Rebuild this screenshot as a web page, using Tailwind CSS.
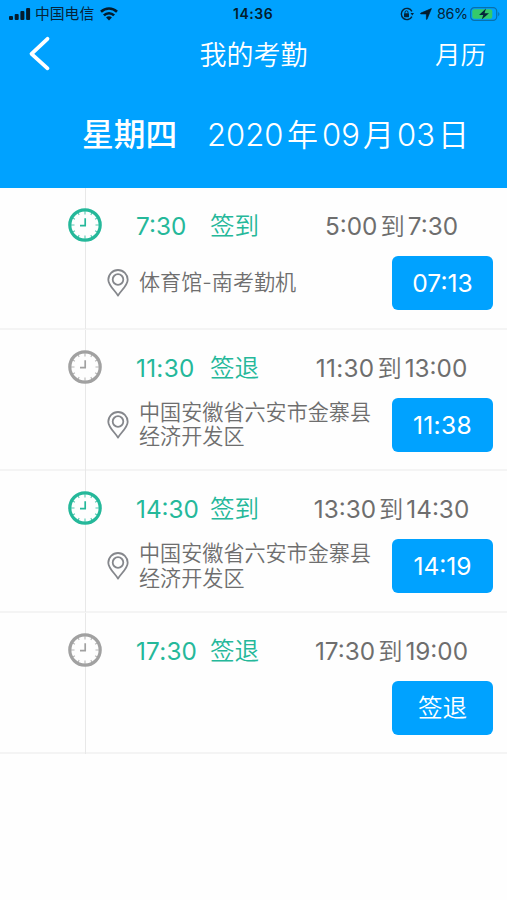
<!DOCTYPE html>
<html lang="zh-CN">
<head>
<meta charset="utf-8">
<title>我的考勤</title>
<script src="https://cdn.jsdelivr.net/npm/@tailwindcss/browser@4"></script>
</head>
<body class="w-[507px] h-[900px] overflow-hidden bg-[#fefefe] font-['Inter','Noto_Sans_CJK_SC',sans-serif] text-[#6e6e6e]">
<svg class="hidden">
  <symbol id="clock" viewBox="0 0 34 34">
    <circle cx="17" cy="17" r="15.2" fill="#fefefe" stroke="currentColor" stroke-width="3.2"/>
    <g stroke="currentColor" stroke-width="1.1" opacity=".75">
      <path d="M17 3v3.5M17 27.5V31M3 17h3.5M27.5 17H31M10 4.900l1.200 2M24 4.900l-1.200 2M10 29.100l1.200-2M24 29.100l-1.200-2M4.900 10l2 1.200M29.100 10l-2 1.200M4.900 24l2-1.200M29.100 24l-2-1.200"/>
    </g>
    <path d="M17.200 10.300v7.600M12 17.600h6" fill="none" stroke="currentColor" stroke-width="1.700"/>
  </symbol>
  <symbol id="pin" viewBox="0 0 22 28">
    <path d="M11 26.600C8.500 22 1.300 16.500 1.300 10.700a9.700 9.700 0 0 1 19.400 0C20.700 16.500 13.500 22 11 26.600Z" fill="none" stroke="#85878c" stroke-width="1.800" stroke-linejoin="round"/>
    <circle cx="11" cy="10.500" r="5.300" fill="none" stroke="#85878c" stroke-width="1.800"/>
  </symbol>
</svg>

<header class="h-[188px] bg-[#00a2ff] text-white">
  <div class="flex h-[27px] items-center pl-[9px] pr-[6px] text-[#06243a]">
    <svg class="h-[14px] w-[22px]" viewBox="0 0 22 14" fill="#031c2d"><rect x="0" y="9" width="4" height="4" rx="1"/><rect x="5.700" y="7" width="4" height="6" rx="1"/><rect x="11.400" y="4" width="4" height="9" rx="1"/><rect x="17.100" y="1" width="4" height="12" rx="1"/></svg>
    <span class="ml-[4px] w-[60px] whitespace-nowrap text-[14.800px] leading-[20px]">中国电信</span>
    <svg class="ml-[5px] h-[14px] w-[18px]" viewBox="0 0 18 14" fill="none" stroke="#031c2d" stroke-width="2.600"><path d="M1 4.700a11.500 11.500 0 0 1 16 0M3.900 8.400a7.200 7.200 0 0 1 10.200 0"/><path d="M6.100 10.500a4 4 0 0 1 5.800 0L9 13.500Z" fill="#031c2d" stroke="none"/></svg>
    <span class="ml-[115px] w-[42px] whitespace-nowrap text-[14px] font-semibold leading-[20px] tracking-[0.550px] text-[#031c2d]">14:36</span>
    <svg class="ml-[125px] h-[14px] w-[14px]" viewBox="0 0 14 14" fill="none" stroke="#06243a"><path d="M11.900 4.400A5.600 5.600 0 1 0 11.900 9.600" stroke-width="1.400"/><path d="M10.500 6h3.500l-1.700 2.500z" fill="#06243a" stroke="none"/><rect x="4" y="6.300" width="5" height="3.900" rx=".6" fill="#06243a" stroke="none"/><path d="M5 6.500V5.300a1.500 1.500 0 0 1 3 0v1.200" stroke-width="1"/></svg>
    <svg class="ml-[6px] h-[12px] w-[12px]" viewBox="0 0 12 12" fill="#031c2d" stroke="#031c2d" stroke-width=".7" stroke-linejoin="round"><path d="M11.400.6 7 11.200q-.4.600-.6-.1V5.900H.800q-.7-.3 0-.8Z"/></svg>
    <span class="ml-[5px] w-[31px] whitespace-nowrap text-[14.300px] leading-[20px] tracking-[-0.300px]">86%</span>
    <svg class="ml-[2px] h-[14px] w-[31px]" viewBox="0 0 31 14"><rect x=".7" y=".7" width="26" height="12.600" rx="3.600" fill="none" stroke="#0870ab" stroke-width="1.200"/><rect x="2.300" y="2.300" width="20" height="9.400" rx="2" fill="#35c96b"/><path d="M28.200 4.700q2.500 2.300 0 4.600z" fill="#0870ab"/><path d="M16 1.500 9 7.900h4.300L11.700 12.600 19 6.200h-4.500z" fill="#06243a"/></svg>
  </div>
  <div class="grid h-[54px] grid-cols-[1fr_auto_1fr] items-center px-[21px]">
    <svg class="ml-[7px] h-[36px] w-[23px]" viewBox="0 0 23 36" fill="none" stroke="white" stroke-width="3.800" stroke-linecap="round" stroke-linejoin="round"><path d="M19.500 2.800 3.500 17.800l16 14.500"/></svg>
    <h1 class="pt-[3px] text-[27px] font-[350] leading-[36px]">我的考勤</h1>
    <span class="justify-self-end pt-[2px] text-[25.500px] font-[350] leading-[36px]">月历</span>
  </div>
  <div class="flex h-[107px] items-center pl-[82px] whitespace-nowrap leading-[40px]">
    <strong class="w-[125px] text-[31.700px] font-medium">星期四</strong>
    <div class="flex text-[31px] font-[350]">
      <span class="w-[80px]">2020</span><span class="w-[35px]">年</span><span class="w-[41px]">09</span><span class="w-[34px]">月</span><span class="w-[41px]">03</span><span>日</span>
    </div>
  </div>
</header>

<main>
  <section class="flex h-[141.500px] border-b-2 border-[#f4f4f4]">
    <div class="relative w-[102px] shrink-0 pl-[68px] pt-[20px] before:absolute before:left-[85px] before:top-0 before:h-[141px] before:w-px before:bg-[#e8e8e8]"><svg class="relative h-[34px] w-[34px] text-[#25b89a]"><use href="#clock"/></svg></div>
    <div class="flex-1 whitespace-nowrap">
      <div class="flex h-[68px] items-center pt-[8px] pl-[34px] text-[24.300px] leading-[32px]">
        <span class="w-[74px] text-[#25b89a]">7:30</span><span class="w-[66px] text-[24.600px] font-[350] text-[#25b89a]">签到</span>
        <div class="flex w-[231px] justify-center gap-[3px]"><span>5:00</span><span class="font-[350]">到</span><span>7:30</span></div>
      </div>
      <div class="flex h-[54px] items-center pl-[5px] pr-[14px]">
        <svg class="h-[28px] w-[22px]"><use href="#pin"/></svg>
        <p class="ml-[10px] flex-1 pt-[1px] text-[21.100px] font-[350] leading-[24.500px]">体育馆-南考勤机</p>
        <button class="h-[54px] w-[101px] rounded-[6px] bg-[#00a2ff] pt-[1px] text-[24.600px] text-white">07:13</button>
      </div>
    </div>
  </section>
  <section class="flex h-[141.500px] border-b-2 border-[#f4f4f4]">
    <div class="relative w-[102px] shrink-0 pl-[68px] pt-[20px] before:absolute before:left-[85px] before:top-0 before:h-[141px] before:w-px before:bg-[#e8e8e8]"><svg class="relative h-[34px] w-[34px] text-[#a1a1a1]"><use href="#clock"/></svg></div>
    <div class="flex-1 whitespace-nowrap">
      <div class="flex h-[68px] items-center pt-[8px] pl-[34px] text-[24.300px] leading-[32px]">
        <span class="w-[74px] tracking-[0.300px] text-[#25b89a]">11:30</span><span class="w-[66px] text-[24.600px] font-[350] text-[#25b89a]">签退</span>
        <div class="flex w-[231px] justify-center gap-[3px]"><span class="tracking-[0.300px]">11:30</span><span class="font-[350]">到</span><span>13:00</span></div>
      </div>
      <div class="flex h-[54px] items-center pl-[5px] pr-[14px]">
        <svg class="h-[28px] w-[22px]"><use href="#pin"/></svg>
        <p class="ml-[10px] flex-1 pt-[1px] text-[21.100px] font-[350] leading-[24.500px]">中国安徽省六安市金寨县<br>经济开发区</p>
        <button class="h-[54px] w-[101px] rounded-[6px] bg-[#00a2ff] pt-[1px] text-[24.600px] tracking-[0.300px] text-white">11:38</button>
      </div>
    </div>
  </section>
  <section class="flex h-[141.500px] border-b-2 border-[#f4f4f4]">
    <div class="relative w-[102px] shrink-0 pl-[68px] pt-[20px] before:absolute before:left-[85px] before:top-0 before:h-[141px] before:w-px before:bg-[#e8e8e8]"><svg class="relative h-[34px] w-[34px] text-[#25b89a]"><use href="#clock"/></svg></div>
    <div class="flex-1 whitespace-nowrap">
      <div class="flex h-[68px] items-center pt-[8px] pl-[34px] text-[24.300px] leading-[32px]">
        <span class="w-[74px] text-[#25b89a]">14:30</span><span class="w-[66px] text-[24.600px] font-[350] text-[#25b89a]">签到</span>
        <div class="flex w-[231px] justify-center gap-[3px]"><span>13:30</span><span class="font-[350]">到</span><span>14:30</span></div>
      </div>
      <div class="flex h-[54px] items-center pl-[5px] pr-[14px]">
        <svg class="h-[28px] w-[22px]"><use href="#pin"/></svg>
        <p class="ml-[10px] flex-1 pt-[1px] text-[21.100px] font-[350] leading-[24.500px]">中国安徽省六安市金寨县<br>经济开发区</p>
        <button class="h-[54px] w-[101px] rounded-[6px] bg-[#00a2ff] pt-[1px] text-[24.600px] text-white">14:19</button>
      </div>
    </div>
  </section>
  <section class="flex h-[141.500px] border-b-2 border-[#f4f4f4]">
    <div class="relative w-[102px] shrink-0 pl-[68px] pt-[20px] before:absolute before:left-[85px] before:top-0 before:h-[141px] before:w-px before:bg-[#e8e8e8]"><svg class="relative h-[34px] w-[34px] text-[#a1a1a1]"><use href="#clock"/></svg></div>
    <div class="flex-1 whitespace-nowrap">
      <div class="flex h-[68px] items-center pt-[8px] pl-[34px] text-[24.300px] leading-[32px]">
        <span class="w-[74px] tracking-[0.200px] text-[#25b89a]">17:30</span><span class="w-[66px] text-[24.600px] font-[350] text-[#25b89a]">签退</span>
        <div class="flex w-[231px] justify-center gap-[3px]"><span>17:30</span><span class="font-[350]">到</span><span>19:00</span></div>
      </div>
      <div class="flex h-[54px] items-center justify-end pr-[14px]">
        <button class="h-[54px] w-[101px] rounded-[6px] bg-[#00a2ff] pt-[1px] text-[24.600px] font-[350] text-white">签退</button>
      </div>
    </div>
  </section>
</main>
</body>
</html>
